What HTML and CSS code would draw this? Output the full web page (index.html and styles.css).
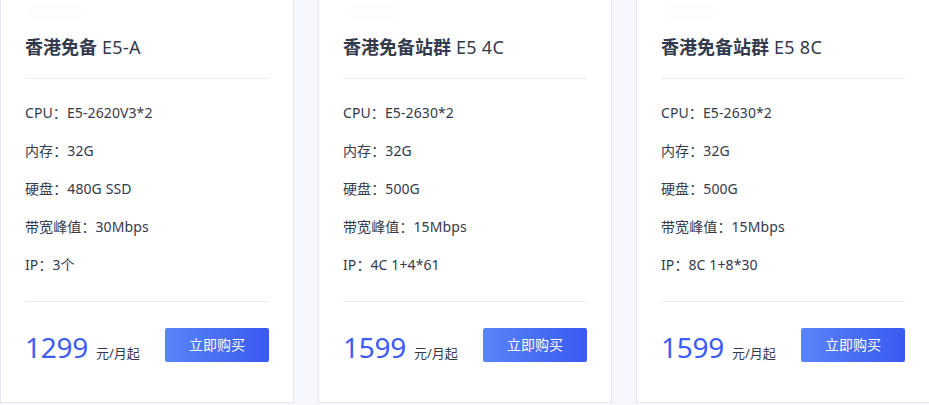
FILE: index.html
```html
<!DOCTYPE html>
<html lang="zh-CN">
<head>
<meta charset="utf-8">
<title>香港免备服务器</title>
<link rel="stylesheet" href="styles.css">
</head>
<body>
<div class="plans">
  <div class="card">
    <div class="tag"></div>
    <h3 class="title"><b>香港免备</b> E5-A</h3>
    <ul class="specs">
      <li>CPU：E5-2620V3*2</li>
      <li>内存：32G</li>
      <li>硬盘：480G SSD</li>
      <li>带宽峰值：30Mbps</li>
      <li>IP：3个</li>
    </ul>
    <div class="foot">
      <div class="price"><span class="num">1299</span><span class="unit">元/月起</span></div>
      <a class="buy" href="#">立即购买</a>
    </div>
  </div>
  <div class="card">
    <div class="tag"></div>
    <h3 class="title"><b>香港免备站群</b> E5 4C</h3>
    <ul class="specs">
      <li>CPU：E5-2630*2</li>
      <li>内存：32G</li>
      <li>硬盘：500G</li>
      <li>带宽峰值：15Mbps</li>
      <li>IP：4C 1+4*61</li>
    </ul>
    <div class="foot">
      <div class="price"><span class="num">1599</span><span class="unit">元/月起</span></div>
      <a class="buy" href="#">立即购买</a>
    </div>
  </div>
  <div class="card">
    <div class="tag"></div>
    <h3 class="title"><b>香港免备站群</b> E5 8C</h3>
    <ul class="specs">
      <li>CPU：E5-2630*2</li>
      <li>内存：32G</li>
      <li>硬盘：500G</li>
      <li>带宽峰值：15Mbps</li>
      <li>IP：8C 1+8*30</li>
    </ul>
    <div class="foot">
      <div class="price"><span class="num">1599</span><span class="unit">元/月起</span></div>
      <a class="buy" href="#">立即购买</a>
    </div>
  </div>
</div>
</body>
</html>
```
FILE: styles.css
```css
html, body {
  margin: 0;
  padding: 0;
  background: #f7f8fd;
  overflow: hidden;
}
body {
  font-family: "Noto Sans", "Noto Sans CJK SC", sans-serif;
  color: #343a4c;
}
.plans {
  display: grid;
  grid-template-columns: 294px 294px 294px;
  column-gap: 24px;
  align-items: start;
}
.card {
  background: #fff;
  border: 1px solid #e4e8f1;
  border-top: none;
  padding: 0 24px 40px;
  display: flex;
  flex-direction: column;
}
.tag {
  width: 54px;
  height: 14px;
  margin: 5px 0 0 3px;
  border-radius: 7px;
  background: #fdfdfd;
}
.title {
  margin: 13px 0 0;
  height: 28px;
  line-height: 28px;
  font-size: 18px;
  font-weight: 400;
  color: #333a4e;
  border-bottom: 1px solid #e9edf6;
  padding-bottom: 18px;
  letter-spacing: 0.3px;
}
.title b {
  font-weight: 700;
  font-family: "Noto Sans CJK SC", sans-serif;
  letter-spacing: 0;
}
.specs {
  list-style: none;
  margin: 15px 0 0;
  padding: 0 0 17px;
  border-bottom: 1px solid #e9edf6;
}
.specs li {
  height: 38px;
  line-height: 38px;
  font-size: 14px;
  color: #343a4c;
  letter-spacing: 0.1px;
}
.foot {
  display: flex;
  justify-content: space-between;
  align-items: flex-start;
  height: 34px;
  padding-top: 26px;
}
.price {
  display: flex;
  align-items: baseline;
  padding-top: 4px;
  height: 30px;
}
.num {
  font-size: 28px;
  line-height: 30px;
  color: #3d5cf2;
  font-weight: 400;
  letter-spacing: -0.3px;
}
.unit {
  font-size: 13px;
  color: #343a4c;
  margin-left: 8px;
}
.buy {
  width: 104px;
  height: 34px;
  line-height: 34px;
  text-align: center;
  border-radius: 2px;
  background: linear-gradient(90deg, #5a84f8, #3a5af1);
  color: #fff;
  font-size: 14px;
  text-decoration: none;
}
```
